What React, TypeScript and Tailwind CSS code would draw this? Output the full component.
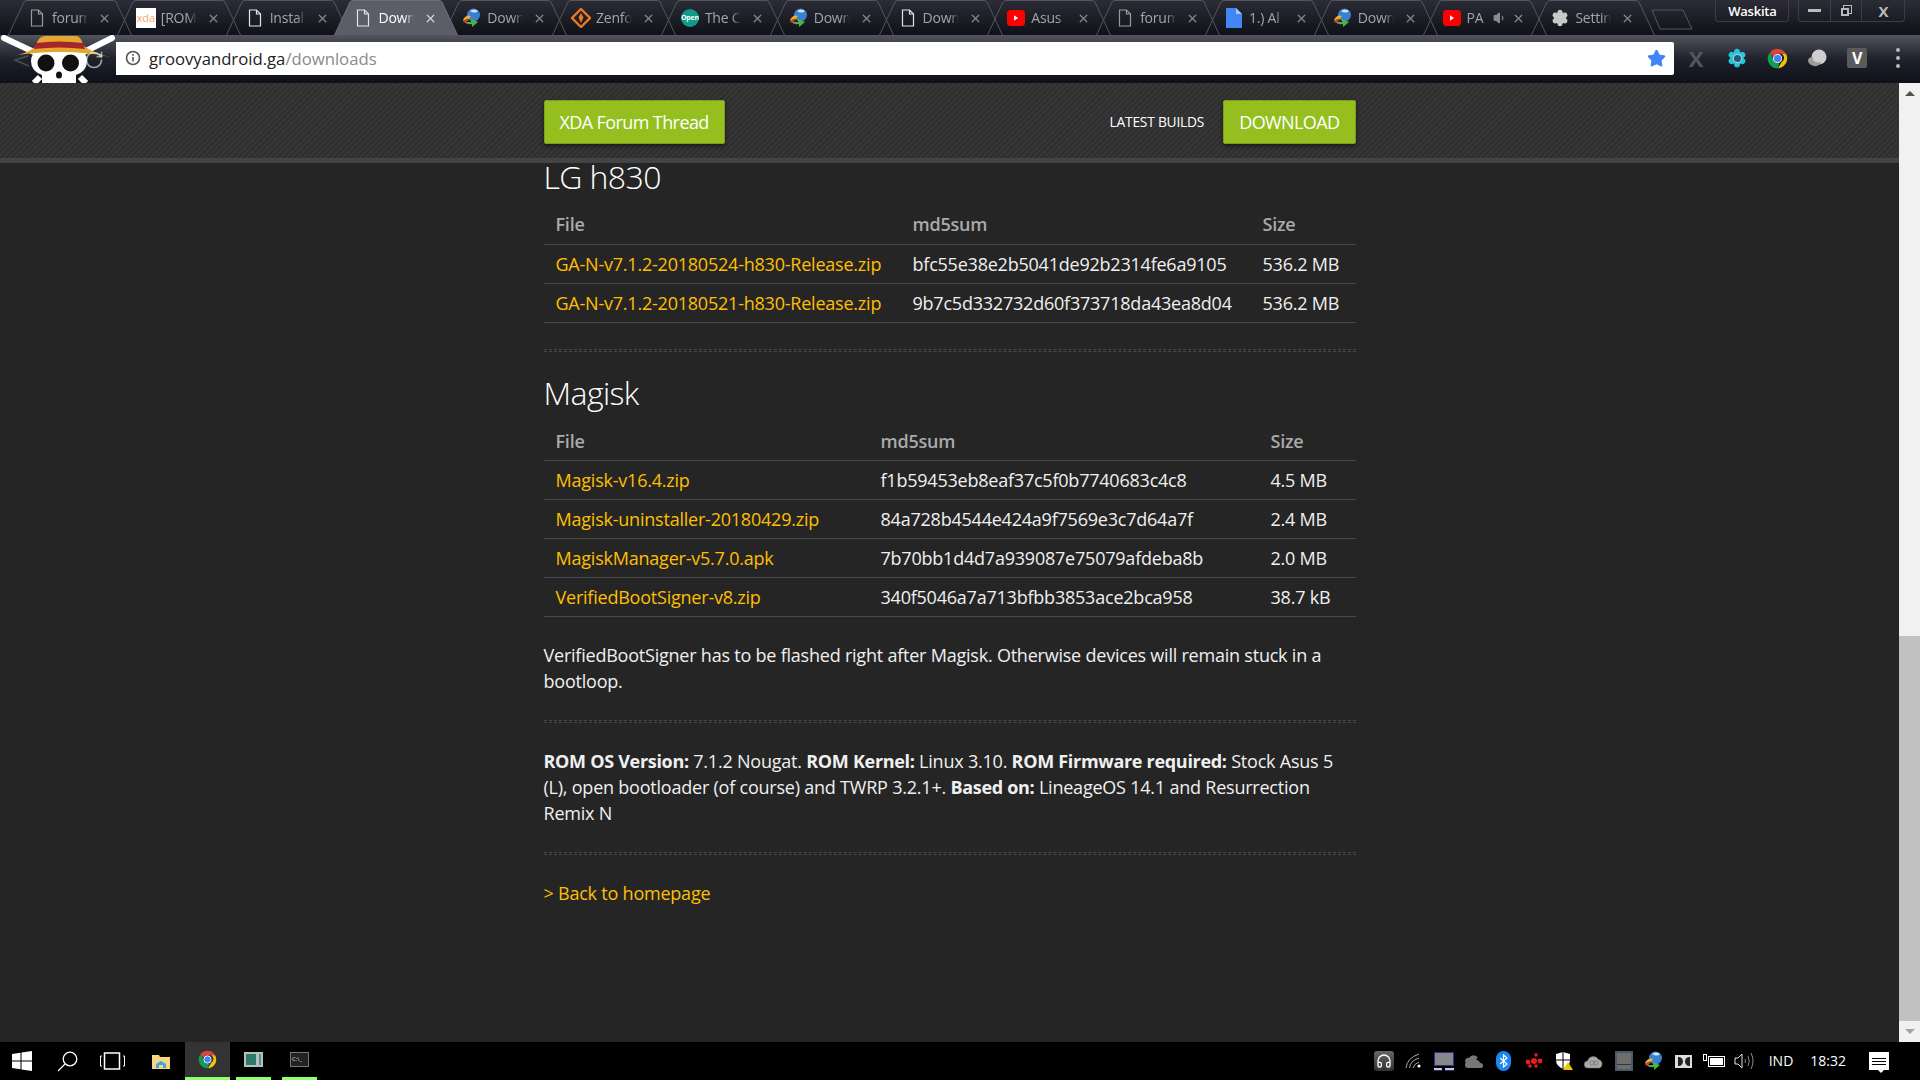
import { Settings, X, Volume1, RotateCw, Star, Headphones } from 'lucide-react';
import type { ReactNode } from 'react';

const FileIcon = ({ bright }: { bright?: boolean }) => (
  <svg width="16" height="18" viewBox="0 0 16 18" fill="none" stroke={bright ? '#e5e5e5' : '#9a9a9a'} strokeWidth="1.2">
    <path d="M2.5 1h7l4 4v12h-11z" />
    <path d="M9.5 1v4h4" />
  </svg>
);

const XdaIcon = () => (
  <div className="w-5 h-[20px] bg-white text-[#f5a66b] text-[11px] leading-[20px] text-center overflow-hidden">xda</div>
);

const IdmIcon = () => (
  <svg width="20" height="20" viewBox="0 0 20 20">
    <circle cx="11.5" cy="7" r="6.5" fill="#3b7fd0" />
    <path d="M8 3q4-3 8 0q-3 3-8 0z" fill="#cfe6f7" />
    <path d="M1 12q3-6 8-4l-2 3q-3-1-4 3z" fill="#e9b32c" />
    <path d="M1 14q1-3 4-3l3 1q-3 0-4 3z" fill="#d63b2f" />
    <path d="M3 14l6 0v-3l7 3-6 5v-3q-5 1-7-2z" fill="#4bb63f" />
  </svg>
);

const ZenIcon = () => (
  <svg width="20" height="20" viewBox="0 0 20 20">
    <path d="M10 1l9 9-9 9-9-9z" fill="none" stroke="#ea7a1f" strokeWidth="2.4" />
    <path d="M10 5l2.5 4.5L10 15l-2.5-5.5z" fill="#ea7a1f" />
  </svg>
);

const OpenIcon = () => (
  <div className="w-[18px] h-[18px] rounded-full bg-[#0f9a8a] text-white text-[7px] font-bold leading-[18px] text-center overflow-hidden">Open</div>
);

const YoutubeIcon = () => (
  <svg width="18" height="16" viewBox="0 0 18 16">
    <rect width="18" height="16" rx="3.5" fill="#f00" />
    <path d="M7 5.2l4 2.8-4 2.8z" fill="#fff" />
  </svg>
);

const DocIcon = () => (
  <svg width="16" height="20" viewBox="0 0 16 20">
    <path d="M0 0h10l6 6v14H0z" fill="#4285f4" />
    <path d="M10 0l6 6h-6z" fill="#a9c6f8" />
  </svg>
);

const ChromeIcon = ({ size = 20 }: { size?: number }) => (
  <svg width={size} height={size} viewBox="0 0 24 24">
    <path d="M12 1a11 11 0 0 1 9.6 5.5H12a5.5 5.5 0 0 0-5.2 3.7L3.4 5A11 11 0 0 1 12 1z" fill="#db4437" />
    <path d="M21.6 6.5A11 11 0 0 1 12.6 23l4.2-7a5.5 5.5 0 0 0 0-9.5z" fill="#f4c20d" />
    <path d="M12.6 23A11 11 0 0 1 3.4 5l4.4 9.5A5.5 5.5 0 0 0 14 17.2z" fill="#0f9d58" />
    <circle cx="12" cy="12" r="4.6" fill="#4285f4" stroke="#fff" strokeWidth="1.1" />
  </svg>
);

const tabs: { title: string; icon: ReactNode; active?: boolean; muted?: boolean }[] = [
  { title: 'forum', icon: <FileIcon /> },
  { title: '[ROM', icon: <XdaIcon /> },
  { title: 'Instal', icon: <FileIcon bright /> },
  { title: 'Down', icon: <FileIcon bright />, active: true },
  { title: 'Down', icon: <IdmIcon /> },
  { title: 'Zenfo', icon: <ZenIcon /> },
  { title: 'The C', icon: <OpenIcon /> },
  { title: 'Down', icon: <IdmIcon /> },
  { title: 'Down', icon: <FileIcon bright /> },
  { title: 'Asus', icon: <YoutubeIcon /> },
  { title: 'forum', icon: <FileIcon /> },
  { title: '1.) Al', icon: <DocIcon /> },
  { title: 'Down', icon: <IdmIcon /> },
  { title: 'PA', icon: <YoutubeIcon />, muted: true },
  { title: 'Settin', icon: <Settings size={18} fill="#c9c9c9" color="#c9c9c9" /> },
];

function Tab({ title, icon, active, muted }: { title: string; icon: ReactNode; active?: boolean; muted?: boolean }) {
  return (
    <div className={`relative shrink-0 w-[124px] h-[35px] -ml-[15.2px] first:ml-0 ${active ? 'z-10' : ''}`}>
      <svg className="absolute inset-0" width="124" height="35" viewBox="0 0 124 35">
        <path
          d="M0.5 35L16 2Q17 0.5 19 0.5H105Q107 0.5 108 2L123.5 35"
          fill={active ? '#5b5d67' : 'none'}
          stroke={active ? '#6d6f78' : '#54565e'}
          strokeWidth="1"
        />
      </svg>
      <div className="relative h-full flex items-center pl-[19px] pt-px">
        <div className="w-5 flex justify-center shrink-0">{icon}</div>
        <div className={`${muted ? 'w-[21px]' : 'w-[36px]'} ml-[5px] shrink-0 overflow-hidden whitespace-nowrap text-[14px] [mask-image:linear-gradient(to_right,black_75%,transparent)] ${active ? 'text-white' : 'text-[#a4a5ab]'}`}>
          {title}
        </div>
        {muted && <Volume1 size={14} className="ml-[5px] shrink-0 text-[#8c8c90]" fill="#8c8c90" />}
        <X size={13} strokeWidth={2.4} className={`${muted ? 'ml-[5px]' : 'ml-[10px]'} shrink-0 ${active ? 'text-[#d5d5d8]' : 'text-[#85868c]'}`} />
      </div>
    </div>
  );
}

function Logo() {
  return (
    <svg className="absolute left-0 top-0" width="116" height="48" viewBox="0 0 116 48">
      <path d="M4 3L34 17" stroke="#fff" strokeWidth="6" strokeLinecap="round" />
      <path d="M112 3L84 17" stroke="#fff" strokeWidth="6" strokeLinecap="round" />
      <path d="M40 42L34 48M80 42L86 48" stroke="#fff" strokeWidth="6" />
      <path d="M31 26Q31 12 59 12Q87 12 87 26Q87 36 76 40V48H42V40Q31 36 31 26z" fill="#fff" />
      <path d="M8 22Q28 19 36 11Q38 1 45 1H76Q81 1 83 10Q92 18 110 22Q88 17 59 17Q30 17 8 22z" fill="#e3a72f" />
      <path d="M36 8Q59 5 83 8L85 14Q59 11 34 14z" fill="#a5262a" />
      <circle cx="46" cy="28" r="8.5" fill="#111" />
      <circle cx="70.5" cy="28" r="8.5" fill="#111" />
      <ellipse cx="59" cy="40" rx="3" ry="3.5" fill="#111" />
      <path d="M28 21L15 25l14 6" fill="none" stroke="#fff" strokeOpacity="0.2" strokeWidth="1.5" />
    </svg>
  );
}

function Hr() {
  return <div className="h-[3px] border-y border-dashed border-[#474747]" />;
}

function FileTable({ rows, widths }: { rows: string[][]; widths: string[] }) {
  return (
    <table className="w-full border-collapse text-left">
      <thead>
        <tr className="border-b border-[#4a4a4a] h-[39px]">
          <th className={`${widths[0]} px-[12px] font-semibold text-[#aaa]`}>File</th>
          <th className={`${widths[1]} px-[12px] font-semibold text-[#aaa]`}>md5sum</th>
          <th className="px-[12px] font-semibold text-[#aaa]">Size</th>
        </tr>
      </thead>
      <tbody>
        {rows.map((r) => (
          <tr key={r[0]} className="border-b border-[#4a4a4a] h-[39px]">
            <td className="px-[12px] text-[#ffbf00]">{r[0]}</td>
            <td className="px-[12px]">{r[1]}</td>
            <td className="px-[12px] whitespace-nowrap">{r[2]}</td>
          </tr>
        ))}
      </tbody>
    </table>
  );
}

const lgRows = [
  ['GA-N-v7.1.2-20180524-h830-Release.zip', 'bfc55e38e2b5041de92b2314fe6a9105', '536.2 MB'],
  ['GA-N-v7.1.2-20180521-h830-Release.zip', '9b7c5d332732d60f373718da43ea8d04', '536.2 MB'],
];

const magiskRows = [
  ['Magisk-v16.4.zip', 'f1b59453eb8eaf37c5f0b7740683c4c8', '4.5 MB'],
  ['Magisk-uninstaller-20180429.zip', '84a728b4544e424a9f7569e3c7d64a7f', '2.4 MB'],
  ['MagiskManager-v5.7.0.apk', '7b70bb1d4d7a939087e75079afdeba8b', '2.0 MB'],
  ['VerifiedBootSigner-v8.zip', '340f5046a7a713bfbb3853ace2bca958', '38.7 kB'],
];

const trayIcons: ReactNode[] = [
  <div className="w-5 h-5 rounded-[3px] bg-gradient-to-b from-[#666] to-[#333] flex items-center justify-center">
    <Headphones size={16} className="text-white" />
  </div>,
  <svg width="18" height="18" viewBox="0 0 18 18" fill="none" stroke="#aaa" strokeWidth="1">
    <path d="M1 16Q2 6 14 2M4.5 16Q5 9 14 6M8 16Q9 12 14 10" />
    <circle cx="14" cy="14" r="1.6" fill="#fff" stroke="none" />
  </svg>,
  <div className="w-5 flex flex-col gap-[2px]">
    <div className="h-[14px] bg-[#888] border border-[#2b2f8c]" />
    <div className="flex gap-[3px]">
      <div className="flex-1 h-[3px] bg-[#ccc] border-b border-[#2b2f8c]" />
      <div className="flex-1 h-[3px] bg-[#ccc] border-b border-[#2b2f8c]" />
    </div>
  </div>,
  <svg width="20" height="14" viewBox="0 0 20 14" fill="#777">
    <path d="M2 9a3 3 0 0 1 3-5a5 5 0 0 1 9 0l-5 2q-3 0-4 3z" />
    <path d="M4 14a3 3 0 0 1 0-6a5 5 0 0 1 9-2a4 4 0 0 1 3 3a2.5 2.5 0 0 1 1 5z" />
  </svg>,
  <div className="w-[15px] h-5 rounded-full bg-[#1a86f0] flex items-center justify-center">
    <svg width="9" height="14" viewBox="0 0 9 14" fill="none" stroke="#fff" strokeWidth="1.2">
      <path d="M1 4l7 6-3.5 3V1L8 4 1 10" />
    </svg>
  </div>,
  <svg width="18" height="18" viewBox="0 0 18 18" fill="#e02020"><circle cx="9" cy="9" r="3" /><circle cx="3" cy="10" r="2.4" /><circle cx="15" cy="9" r="2.4" /><circle cx="11" cy="3" r="1.8" /><circle cx="5" cy="14" r="1.8" /><circle cx="11" cy="14" r="1.8" /></svg>,
  <svg width="20" height="20" viewBox="0 0 20 20"><path d="M9 1l7 2v6q0 6-7 9q-7-3-7-9V3z" fill="#fff" /><path d="M9 1v17M2 9h14" stroke="#000" strokeWidth="1" /><path d="M14 11l5 8h-10z" fill="#f8c400" /></svg>,
  <svg width="20" height="15" viewBox="0 0 20 15" fill="#aaa" stroke="#666" strokeWidth="0.6">
    <path d="M4 14a3.5 3.5 0 0 1-.5-7a6 6 0 0 1 11-1.5a4.5 4.5 0 0 1 1 8.5z" />
    <circle cx="8" cy="9" r="2.2" fill="none" />
    <circle cx="12" cy="9" r="2.2" fill="none" />
  </svg>,
  <div className="w-[18px] h-5 bg-[#6e6e6e] border-2 border-[#4a5a6a] flex items-end">
    <div className="w-full h-[5px] border-t border-[#333]" />
  </div>,
  <IdmIcon />,
  <div className="flex gap-[2px] w-[17px] h-[13px] bg-[#ddd] p-[2px] justify-center">
    <div className="w-[5px] bg-[#222] rounded-r-full" />
    <div className="w-[5px] bg-[#222] rounded-l-full" />
  </div>,
  <div className="flex items-start">
    <div className="w-[4px] h-[7px] border border-white mr-px -mt-[2px]" />
    <div className="w-[17px] h-[11px] border border-white p-px"><div className="w-full h-full bg-white" /></div>
  </div>,
  <svg width="20" height="18" viewBox="0 0 20 18" fill="none" stroke="#fff" strokeWidth="0.9">
    <path d="M1 6h3l4-4v14l-4-4H1z" />
    <path d="M11 7q1 2 0 4M14 4q2.5 5 0 10M17 1q4 8 0 16" stroke="#999" />
  </svg>,
];

export default function App() {
  return (
    <div className="w-[1920px] h-[1080px] overflow-hidden flex flex-col bg-[#252525] font-['Open_Sans',sans-serif] text-[18px] leading-[26px] tracking-[-0.22px] text-[#f0f0f0]">
      {/* tab strip */}
      <div className="h-[35px] shrink-0 flex pl-[8px] bg-gradient-to-b from-[#2b2c35] to-[#10121a]">
        {tabs.map((t, i) => (
          <Tab key={i} {...t} />
        ))}
        <div className="ml-[-4px] mt-[9px] shrink-0 w-[42px] h-[21px]">
          <svg width="42" height="21" viewBox="0 0 42 21" fill="none" stroke="#55575e">
            <path d="M1 1H32L41 20H9z" />
          </svg>
        </div>
        <div className="ml-[22px] shrink-0 w-[74px] h-[22px] border border-t-0 border-[#3c3e46] rounded-b flex items-center justify-center text-[13px] font-semibold text-white">
          Waskita
        </div>
        <div className="ml-[9px] shrink-0 w-[107px] h-[22px] border border-t-0 border-[#3c3e46] rounded-b flex items-center text-[#bbb]">
          <div className="w-[31px] flex justify-center"><div className="w-[13px] h-[3px] bg-[#bbb]" /></div>
          <div className="w-[32px] h-full border-x border-[#3c3e46] flex items-center justify-center">
            <div className="relative w-[11px] h-[11px]">
              <div className="absolute right-0 top-0 w-[9px] h-[9px] border border-[#bbb]" />
              <div className="absolute left-0 bottom-0 w-[8px] h-[8px] border-2 border-[#bbb] bg-[#15171f]" />
            </div>
          </div>
          <div className="flex-1 flex justify-center font-bold text-[15px]">X</div>
        </div>
      </div>

      {/* toolbar */}
      <div className="relative h-[48px] shrink-0 bg-gradient-to-b from-[#53545e] via-[#20222b] to-[#0f1119] flex items-center pt-[6px] pb-[8px]">
        <Logo />
        <RotateCw size={20} className="absolute left-[84px] top-[15px] text-white/60" />
        <div className="relative ml-[116px] w-[1558px] h-[33px] bg-white rounded-r-[2px] flex items-center text-[16.7px] tracking-normal">
          <svg className="ml-[9px]" width="16" height="16" viewBox="0 0 16 16" fill="none" stroke="#555" strokeWidth="1.6">
            <circle cx="8" cy="8" r="6.5" />
            <path d="M8 7v4.5M8 4v1.8" />
          </svg>
          <span className="ml-[8px] pt-px text-[#222]">groovyandroid.ga</span>
          <span className="pt-px text-[#8a8a8a]">/downloads</span>
          <Star size={19} className="ml-auto mr-[8px] text-[#4285f4]" fill="#4285f4" />
        </div>
        <div className="ml-[14px] w-[16px] text-center text-[#55565c] text-[22px] font-bold">X</div>
        <div className="relative ml-[23px] w-5 flex items-center justify-center">
          <Settings size={20} color="#25c7d9" fill="#25c7d9" strokeWidth={2.2} />
          <div className="absolute w-[9px] h-[9px] rounded-full bg-[#1a5c78] border border-white/70" />
        </div>
        <div className="ml-[20px] w-5"><ChromeIcon size={21} /></div>
        <svg className="ml-[20px]" width="20" height="20" viewBox="0 0 20 20">
          <circle cx="12" cy="9" r="7.5" fill="#cfcfcf" />
          <path d="M1 13q0-4 5-4q-1 4 3 5q3 1 6 0q-4 5-8 4q-5-1-6-5z" fill="#9c9c9c" />
        </svg>
        <div className="ml-[20px] w-5 h-5 rounded-[2px] bg-[#5a5a5a] flex items-center justify-center text-white font-bold text-[16px]">V</div>
        <div className="ml-[29px] flex flex-col gap-[4px]">
          <span className="w-[4px] h-[4px] rounded-full bg-[#bbb]" />
          <span className="w-[4px] h-[4px] rounded-full bg-[#bbb]" />
          <span className="w-[4px] h-[4px] rounded-full bg-[#bbb]" />
        </div>
      </div>

      {/* page + scrollbar */}
      <div className="flex-1 min-h-0 flex">
        <div className="flex-1 min-w-0 overflow-hidden">
          <div className="h-[80px] flex justify-center border-b-[5px] border-[#444] bg-[repeating-linear-gradient(135deg,#2f2f2f_0,#2f2f2f_2px,#363636_2px,#363636_4px)]">
            <div className="w-[812px] flex items-center pt-[3px]">
              <a className="h-[44px] px-[15px] flex items-center bg-[#94bf1f] border border-[#7d9f1c] rounded-[2px] shadow-[0_2px_4px_rgba(0,0,0,0.5)] text-white tracking-[-0.6px]">XDA Forum Thread</a>
              <span className="ml-auto text-[13.8px] text-white">LATEST BUILDS</span>
              <a className="ml-[19px] h-[44px] px-[15px] flex items-center bg-[#94bf1f] border border-[#7d9f1c] rounded-[2px] shadow-[0_2px_4px_rgba(0,0,0,0.5)] text-white tracking-[-0.6px]">DOWNLOAD</a>
            </div>
          </div>
          <div className="w-[812px] ml-[543.5px]">
            <h2 className="text-[32px] leading-[36px] font-light tracking-[-0.6px] -mt-[4px] mb-[10px] text-white">LG h830</h2>
            <FileTable rows={lgRows} widths={['w-[357px]', 'w-[350px]']} />
            <div className="mt-[26px] mb-[23px]"><Hr /></div>
            <h2 className="text-[32px] leading-[36px] font-light tracking-[-0.6px] text-white mb-[11px]">Magisk</h2>
            <FileTable rows={magiskRows} widths={['w-[325px]', 'w-[390px]']} />
            <p className="mt-[25px]">VerifiedBootSigner has to be flashed right after Magisk. Otherwise devices will remain stuck in a bootloop.</p>
            <div className="mt-[26px] mb-[25px]"><Hr /></div>
            <p>
              <b className="font-bold tracking-[-0.3px]">ROM OS Version:</b> 7.1.2 Nougat. <b className="font-bold tracking-[-0.3px]">ROM Kernel:</b> Linux 3.10. <b className="font-bold tracking-[-0.3px]">ROM Firmware required:</b> Stock Asus 5 (L), open bootloader (of course) and TWRP 3.2.1+. <b className="font-bold tracking-[-0.3px]">Based on:</b> LineageOS 14.1 and Resurrection Remix N
            </p>
            <div className="mt-[26px] mb-[25px]"><Hr /></div>
            <a className="text-[#ffbf00]">&gt; Back to homepage</a>
          </div>
        </div>
        <div className="w-[21px] shrink-0 bg-[#f1f1f1] flex flex-col items-center">
          <div className="h-[21px] shrink-0 flex items-center justify-center">
            <div className="w-0 h-0 border-x-[5px] border-x-transparent border-b-[5px] border-b-[#505050]" />
          </div>
          <div className="flex-1" />
          <div className="w-full h-[385px] shrink-0 bg-[#c1c1c1]" />
          <div className="h-[21px] shrink-0 flex items-center justify-center">
            <div className="w-0 h-0 border-x-[5px] border-x-transparent border-t-[5px] border-t-[#a3a3a3]" />
          </div>
        </div>
      </div>

      {/* taskbar */}
      <div className="h-[38px] shrink-0 bg-black flex items-center text-white tracking-normal">
        <svg className="ml-[12px]" width="20" height="20" viewBox="0 0 20 20" fill="#fff">
          <path d="M0 3l8.5-1.2v7.6H0zM9.5 1.6L20 0v9.4H9.5zM0 10.5h8.5v7.7L0 17zM9.5 10.5H20V20L9.5 18.4z" />
        </svg>
        <svg className="ml-[25px]" width="21" height="21" viewBox="0 0 21 21" fill="none" stroke="#fff" strokeWidth="1.3">
          <circle cx="13" cy="8" r="6.8" />
          <path d="M8 13L1 20" />
        </svg>
        <svg className="ml-[22px]" width="25" height="18" viewBox="0 0 25 18" fill="none" stroke="#fff">
          <rect x="4.5" y="1" width="15" height="16" strokeWidth="1.5" />
          <path d="M2 4H0.5V14H2M23 4H24.5V14H23" strokeWidth="1" />
        </svg>
        <svg className="ml-[27px]" width="18" height="16" viewBox="0 0 18 16">
          <path d="M0 2h7l1 2h10v12H0z" fill="#f6d680" />
          <path d="M4 15v-4l5-3 5 3v4h-3v-3H7v3z" fill="#3aa7e0" />
        </svg>
        <div className="ml-[15px] w-[45px] h-full bg-[#333] border-b-[3px] border-[#8fff6f] flex items-center justify-center">
          <ChromeIcon size={19} />
        </div>
        <div className="ml-[6px] w-[35px] h-full border-b-[3px] border-[#8fff6f] flex items-center justify-center">
          <div className="w-[19px] h-[15px] bg-[#b9bfc0] p-[2px] flex gap-[3px]">
            <div className="flex-1 bg-[#2d7a6b]" />
            <div className="w-[2px] bg-[#3b9a8c]" />
          </div>
        </div>
        <div className="ml-[11px] w-[35px] h-full border-b-[3px] border-[#8fff6f] flex items-center justify-center">
          <div className="w-[19px] h-[15px] bg-[#222] border border-[#777] text-[6px] leading-[12px] text-[#ddd] pl-px">C:\_</div>
        </div>
        <div className="ml-auto flex items-center">
          {trayIcons.map((icon, i) => (
            <div key={i} className="w-[30px] flex justify-center">{icon}</div>
          ))}
          <span className="ml-[10px] text-[14px]">IND</span>
          <span className="ml-[17px] text-[14px]">18:32</span>
          <div className="relative ml-[23px] mr-[31px] w-5 h-[18px] bg-white flex flex-col justify-center gap-[2px] px-[3px]">
            <div className="h-px bg-black" />
            <div className="h-px bg-black" />
            <div className="h-px bg-black" />
            <div className="absolute left-[9px] -bottom-[3px] w-0 h-0 border-x-[3px] border-x-transparent border-t-[3px] border-t-white" />
          </div>
        </div>
      </div>
    </div>
  );
}
